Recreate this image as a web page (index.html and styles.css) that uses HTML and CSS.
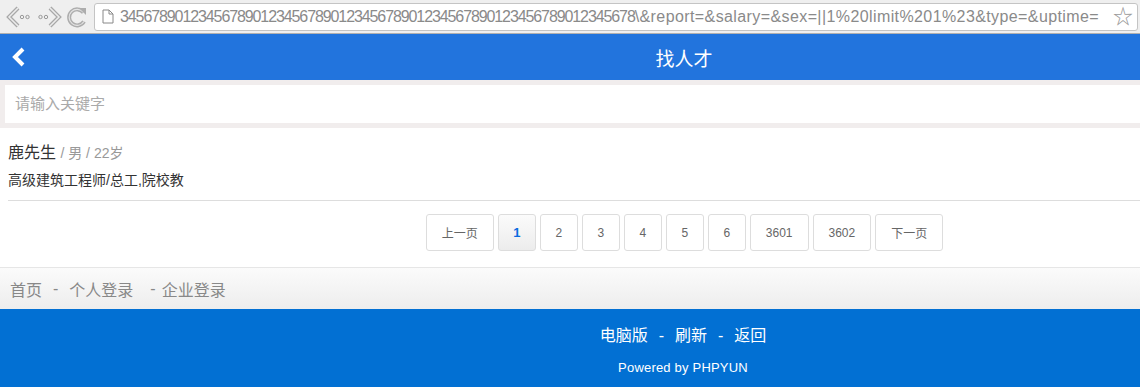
FILE: index.html
```html
<!DOCTYPE html>
<html lang="zh-CN">
<head>
    <meta charset="UTF-8">
    <meta name="viewport" content="width=device-width, initial-scale=1.0">
    <title>找人才</title>
    <link rel="stylesheet" href="styles.css">
</head>
<body>
    <div class="toolbar">
        <div class="nav-icons">
            <svg class="tb-icon" width="28" height="24" viewBox="0 0 28 24">
                <path d="M13 3 L4 12 L13 21" fill="none" stroke="#a8a8a8" stroke-width="4"/>
                <path d="M13 3 L4 12 L13 21" fill="none" stroke="#ececec" stroke-width="1.5"/>
                <circle cx="17" cy="12" r="1.7" fill="none" stroke="#999"/>
                <circle cx="22.5" cy="12" r="1.7" fill="none" stroke="#999"/>
            </svg>
            <svg class="tb-icon" width="28" height="24" viewBox="0 0 28 24">
                <circle cx="5.5" cy="12" r="1.7" fill="none" stroke="#999"/>
                <circle cx="11" cy="12" r="1.7" fill="none" stroke="#999"/>
                <path d="M15 3 L24 12 L15 21" fill="none" stroke="#a8a8a8" stroke-width="4"/>
                <path d="M15 3 L24 12 L15 21" fill="none" stroke="#ececec" stroke-width="1.5"/>
            </svg>
            <svg class="tb-icon" width="24" height="24" viewBox="0 0 24 24">
                <path d="M18.5 7.5 A8 8 0 1 0 19 16.5" fill="none" stroke="#adadad" stroke-width="4"/>
                <path d="M18.5 7.5 A8 8 0 1 0 19 16.5" fill="none" stroke="#e4e4e4" stroke-width="1.2"/>
                <path d="M14 3 L21 3 L21 10 Z" fill="#adadad"/>
            </svg>
        </div>
        <div class="address">
            <svg class="page-icon" width="12" height="15" viewBox="0 0 12 15">
                <path d="M1 1 H7 L11 5 V14 H1 Z M7 1 V5 H11" fill="#fff" stroke="#888" stroke-width="1"/>
            </svg>
            <div class="url"><span class="url-id">345678901234567890123456789012345678901234567890123456789012345678</span><span class="url-query">\&amp;report=&amp;salary=&amp;sex=||1%20limit%201%23&amp;type=&amp;uptime=</span></div>
            <span class="star">☆</span>
        </div>
    </div>

    <div class="viewport">
        <div class="page">
            <div class="header">
                <svg class="back" width="16" height="22" viewBox="0 0 16 22">
                    <path d="M12 3 L4 11 L12 19" fill="none" stroke="#fff" stroke-width="4"/>
                </svg>
                <span class="title">找人才</span>
            </div>

            <div class="search">
                <div class="search-input">请输入关键字</div>
            </div>

            <div class="resume">
                <div class="resume-name">鹿先生 <span class="resume-meta">/ 男 / 22岁</span></div>
                <div class="resume-job">高级建筑工程师/总工,院校教</div>
            </div>

            <div class="pager">
                <a class="pg">上一页</a>
                <a class="pg num active">1</a>
                <a class="pg num">2</a>
                <a class="pg num">3</a>
                <a class="pg num">4</a>
                <a class="pg num">5</a>
                <a class="pg num">6</a>
                <a class="pg">3601</a>
                <a class="pg">3602</a>
                <a class="pg">下一页</a>
            </div>

            <div class="foot-nav">
                <a>首页</a><span class="sep">-</span><a>个人登录</a><span class="sep wide">-</span><a>企业登录</a>
            </div>

            <div class="footer">
                <div class="footer-links">
                    <a>电脑版</a><span class="sep">-</span><a>刷新</a><span class="sep">-</span><a>返回</a>
                </div>
                <div class="powered">Powered by PHPYUN</div>
            </div>
        </div>
    </div>
</body>
</html>
```

FILE: styles.css
```css
body {
    margin: 0;
    font-family: "Liberation Sans", "Noto Sans CJK SC", sans-serif;
    background: #fff;
    overflow: hidden;
}

a {
    text-decoration: none;
}

.toolbar {
    height: 33px;
    background: #efefef;
    border-bottom: 1px solid #b0b0b0;
    display: flex;
    align-items: center;
}

.nav-icons {
    display: flex;
    align-items: center;
    gap: 2px;
    padding-left: 5px;
    width: 89px;
}

.address {
    flex: 1;
    height: 26px;
    margin-right: 2px;
    background: #fff;
    border: 1px solid #c4c4c4;
    border-radius: 3px;
    display: flex;
    align-items: center;
    padding: 0 4px 0 7px;
    overflow: hidden;
}

.page-icon {
    flex: none;
    margin-right: 6px;
}

.url {
    flex: 1;
    white-space: nowrap;
    overflow: hidden;
    font-size: 16px;
    color: #8a8a8a;
}

.url-id {
    letter-spacing: -1.1px;
}

.url-query {
    letter-spacing: 0.4px;
}

.star {
    flex: none;
    font-size: 20px;
    color: #999;
    margin-left: 6px;
    line-height: 1;
}

.viewport {
    overflow: hidden;
}

.page {
    width: 1366px;
}

.header {
    height: 46px;
    background: #2274dd;
    display: flex;
    align-items: center;
    justify-content: center;
    position: relative;
}

.back {
    position: absolute;
    left: 11px;
    top: 12px;
}

.title {
    color: #fff;
    font-size: 19px;
    margin-left: 2px;
}

.search {
    background: #f1eded;
    padding: 5px;
}

.search-input {
    height: 38px;
    background: #fff;
    line-height: 38px;
    padding-left: 10px;
    font-size: 15px;
    color: #aaa;
}

.resume {
    margin-left: 8px;
    padding: 12px 0 9px;
    border-bottom: 1px solid #ddd;
}

.resume-name {
    font-size: 16px;
    line-height: 26px;
    color: #333;
}

.resume-meta {
    font-size: 14px;
    color: #999;
}

.resume-job {
    margin-top: 3px;
    font-size: 14px;
    line-height: 22px;
    color: #333;
}

.pager {
    display: flex;
    justify-content: center;
    gap: 4px;
    padding: 13px 0 16px 3px;
}

.pg {
    box-sizing: border-box;
    height: 37px;
    padding: 0 15px;
    border: 1px solid #ddd;
    border-radius: 3px;
    background: #fff;
    font-size: 12px;
    color: #666;
    display: flex;
    align-items: center;
    justify-content: center;
}

.pg.num {
    width: 38px;
    padding: 0;
}

.pg.active {
    background: linear-gradient(#fbfbfb, #ececec);
    color: #0a6be0;
    font-weight: bold;
    font-size: 13px;
}

.foot-nav {
    height: 41px;
    border-top: 1px solid #e6e6e6;
    background: linear-gradient(#fbfbfb, #ededed);
    display: flex;
    align-items: center;
    padding-left: 10px;
    font-size: 16px;
    color: #888;
}

.foot-nav .sep {
    margin: 0 11px;
}

.foot-nav .sep.wide {
    margin: 0 6px 0 17px;
}

.footer {
    height: 78px;
    background: #0270d3;
    color: #fff;
    text-align: center;
}

.footer-links {
    padding-top: 16px;
    font-size: 16px;
    line-height: 22px;
}

.footer-links .sep {
    margin: 0 11px;
}

.powered {
    margin-top: 12px;
    font-size: 13px;
    letter-spacing: 0.2px;
    line-height: 18px;
}
```
